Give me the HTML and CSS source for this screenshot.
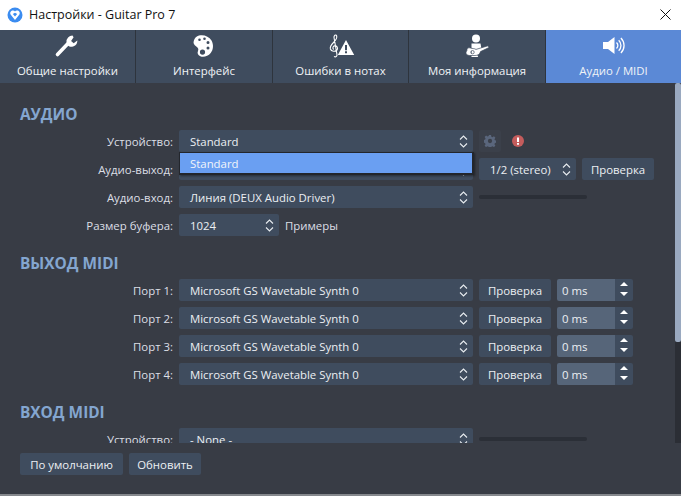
FILE: index.html
```html
<!DOCTYPE html>
<html lang="ru">
<head>
<meta charset="utf-8">
<title>Настройки - Guitar Pro 7</title>
<link rel="stylesheet" href="styles.css">
</head>
<body>
<div class="window">
  <header class="titlebar">
    <svg class="app-logo" width="16" height="16" viewBox="0 0 16 16"><circle cx="8" cy="8" r="7.5" fill="#3b8cf0"/><path d="M8 13 3.600 7.600C2.600 5.600 4 3.600 6 3.600c.9 0 1.600.4 2 1 .4-.6 1.100-1 2-1 2 0 3.400 2 2.400 4z" fill="#fff"/><path d="M5.800 7 8 5.800 10.200 7 8 9.600z" fill="#3b8cf0"/></svg>
    <span class="title">Настройки - Guitar Pro 7</span>
    <svg class="close" width="11" height="11" viewBox="0 0 11 11"><path d="M.5.5l10 10M10.500.5l-10 10" stroke="#111" stroke-width="1" fill="none"/></svg>
  </header>
  <nav class="tabs">
    <div class="tab">
      <svg class="tab-icon" width="28" height="24" viewBox="0 0 28 24"><path d="M3.500 20.500 13.500 10" stroke="#fff" stroke-width="3.600" stroke-linecap="round" fill="none"/><path d="M18.500 1.500a6 6 0 0 0-6 6.500c0 2.800 2.800 5.300 5.500 4.800 3.200-.3 5.500-2.800 5.300-6.200l-3.600 2.600-2.600-2.100 2.500-3.900z" fill="#fff"/></svg>
      <span>Общие настройки</span>
    </div>
    <div class="tab">
      <svg class="tab-icon" width="28" height="24" viewBox="0 0 28 24"><path fill-rule="evenodd" d="M9 1.500c5-1.200 10 1 12.500 5 2.200 4 2 9-.8 12.500-2.800 3.400-7.200 4.600-10.400 3.300-2.400-1-3.300-3-2.300-5.200.7-1.800.4-3-1.400-4.300C3.700 10.500 3 9 3.900 6.500 4.700 4 6.500 2.100 9 1.500zM9.500 4.500a1.300 1.300 0 1 0 0 2.600 1.300 1.300 0 0 0 0-2.600zM14.500 3.500a1.300 1.300 0 1 0 0 2.600 1.300 1.300 0 0 0 0-2.600zM18 7a1.500 1.500 0 1 0 0 3 1.500 1.500 0 0 0 0-3zM18 12.500a1.500 1.500 0 1 0 0 3 1.500 1.500 0 0 0 0-3zM12.500 15.500a2.600 2.600 0 1 0 0 5.200 2.600 2.600 0 0 0 0-5.200z" fill="#fff"/></svg>
      <span>Интерфейс</span>
    </div>
    <div class="tab">
      <svg class="tab-icon" width="28" height="24" viewBox="0 0 28 24"><path d="M7 22.500c2 1 3.400-.4 2.900-2.400L7 3.500C6.800 1.500 8.700 0 9.600 1.800c.8 2-.6 4.200-3.100 6.700C4 11 2.800 12.800 3.400 15c.8 2.400 5 3.200 6.700.9 1.200-1.900-.2-4.300-2.400-4-1.900.3-2.400 2.500-1 3.600" stroke="#fff" stroke-width="1.100" fill="none"/><path fill-rule="evenodd" d="M19 6 27.200 21H10.800zM18 11v5.300h2V11zM18 17.300v2h2v-2z" fill="#fff"/></svg>
      <span>Ошибки в нотах</span>
    </div>
    <div class="tab">
      <svg class="tab-icon" width="28" height="24" viewBox="0 0 28 24"><circle cx="13" cy="4.500" r="4" fill="#fff"/><path d="M8.500 9.500h9l1 5.500-5.500 3 2.200 5H8.500z" fill="#fff"/><path fill-rule="evenodd" d="M25 11.800 26 13.500 17.500 17.600C17 20.500 14.500 21.500 12 21.500H6.500C4 21.500 2.800 20 3 18.500c.2-1.300 1.200-1.700 1-3-.1-1.500 2-2 3.500-1.500 2 .8 3.500.2 5.500 1.400zM9.500 16.500a1.700 1.700 0 1 0 0 3.400 1.700 1.700 0 0 0 0-3.400z" fill="#fff" stroke="#3f4c5e" stroke-width=".7"/></svg>
      <span>Моя информация</span>
    </div>
    <div class="tab tab-active">
      <svg class="tab-icon" width="28" height="24" viewBox="0 0 28 24"><path d="M3 8h5L14.500 3v17L8 15H3z" fill="#fff"/><path d="M16.500 8.500c1.800 1.700 1.800 4.300 0 6M18.700 6.300c3 3 3 7.500 0 10.500M20.900 4c4.200 4.300 4.200 10.800 0 15" stroke="#fff" stroke-width="1.300" fill="none"/></svg>
      <span>Аудио / MIDI</span>
    </div>
  </nav>
  <div class="body">
    <main class="scroll">
      <section class="section">
        <h2>АУДИО</h2>
        <div class="row">
          <label>Устройство:</label>
          <div class="select wide"><span>Standard</span><svg class="chev" width="9" height="13" viewBox="0 0 9 13"><path d="M1 4.500 4.500 1 8 4.500M1 8.500 4.500 12 8 8.500" stroke="#e8ecf0" stroke-width="1.100" fill="none"/></svg></div>
          <div class="tool"><svg width="12" height="12" viewBox="0 0 14 14"><path fill-rule="evenodd" d="M5.800 0h2.400l.4 2 1.300.6 1.700-1.100 1.700 1.700-1.100 1.700.6 1.300 2 .4v2.400l-2 .4-.6 1.300 1.100 1.700-1.700 1.700-1.700-1.100-1.300.6-.4 2H5.800l-.4-2-1.300-.6-1.700 1.100-1.700-1.700 1.100-1.700-.6-1.300-2-.4V5.800l2-.4.6-1.300-1.100-1.700 1.700-1.700 1.700 1.100 1.300-.6zM7 4.500a2.500 2.500 0 1 0 0 5 2.500 2.500 0 0 0 0-5z" fill="#5a667c"/></svg></div>
          <svg class="alert" width="12" height="12" viewBox="0 0 12 12"><circle cx="6" cy="6" r="6" fill="#c45c5c"/><path d="M5 2.500h2V7H5zM5 8h2v1.800H5z" fill="#fff"/></svg>
        </div>
        <div class="row">
          <label>Аудио-выход:</label>
          <div class="select wide"><span></span><svg class="chev" width="9" height="13" viewBox="0 0 9 13"><path d="M1 4.500 4.500 1 8 4.500M1 8.500 4.500 12 8 8.500" stroke="#e8ecf0" stroke-width="1.100" fill="none"/></svg></div>
          <div class="select channels"><span>1/2 (stereo)</span><svg class="chev" width="9" height="13" viewBox="0 0 9 13"><path d="M1 4.500 4.500 1 8 4.500M1 8.500 4.500 12 8 8.500" stroke="#e8ecf0" stroke-width="1.100" fill="none"/></svg></div>
          <button class="btn test">Проверка</button>
        </div>
        <div class="row">
          <label>Аудио-вход:</label>
          <div class="select wide"><span>Линия (DEUX Audio Driver)</span><svg class="chev" width="9" height="13" viewBox="0 0 9 13"><path d="M1 4.500 4.500 1 8 4.500M1 8.500 4.500 12 8 8.500" stroke="#e8ecf0" stroke-width="1.100" fill="none"/></svg></div>
          <div class="level"></div>
        </div>
        <div class="row">
          <label>Размер буфера:</label>
          <div class="select buffer"><span>1024</span><svg class="chev" width="9" height="13" viewBox="0 0 9 13"><path d="M1 4.500 4.500 1 8 4.500M1 8.500 4.500 12 8 8.500" stroke="#e8ecf0" stroke-width="1.100" fill="none"/></svg></div>
          <span class="unit">Примеры</span>
        </div>
      </section>
      <section class="section">
        <h2>ВЫХОД MIDI</h2>
        <div class="row">
          <label>Порт 1:</label>
          <div class="select wide"><span>Microsoft GS Wavetable Synth 0</span><svg class="chev" width="9" height="13" viewBox="0 0 9 13"><path d="M1 4.500 4.500 1 8 4.500M1 8.500 4.500 12 8 8.500" stroke="#e8ecf0" stroke-width="1.100" fill="none"/></svg></div>
          <button class="btn test">Проверка</button>
          <div class="spin"><span class="spin-value">0 ms</span><span class="spin-arrows"><i class="up"></i><i class="down"></i></span></div>
        </div>
        <div class="row">
          <label>Порт 2:</label>
          <div class="select wide"><span>Microsoft GS Wavetable Synth 0</span><svg class="chev" width="9" height="13" viewBox="0 0 9 13"><path d="M1 4.500 4.500 1 8 4.500M1 8.500 4.500 12 8 8.500" stroke="#e8ecf0" stroke-width="1.100" fill="none"/></svg></div>
          <button class="btn test">Проверка</button>
          <div class="spin"><span class="spin-value">0 ms</span><span class="spin-arrows"><i class="up"></i><i class="down"></i></span></div>
        </div>
        <div class="row">
          <label>Порт 3:</label>
          <div class="select wide"><span>Microsoft GS Wavetable Synth 0</span><svg class="chev" width="9" height="13" viewBox="0 0 9 13"><path d="M1 4.500 4.500 1 8 4.500M1 8.500 4.500 12 8 8.500" stroke="#e8ecf0" stroke-width="1.100" fill="none"/></svg></div>
          <button class="btn test">Проверка</button>
          <div class="spin"><span class="spin-value">0 ms</span><span class="spin-arrows"><i class="up"></i><i class="down"></i></span></div>
        </div>
        <div class="row">
          <label>Порт 4:</label>
          <div class="select wide"><span>Microsoft GS Wavetable Synth 0</span><svg class="chev" width="9" height="13" viewBox="0 0 9 13"><path d="M1 4.500 4.500 1 8 4.500M1 8.500 4.500 12 8 8.500" stroke="#e8ecf0" stroke-width="1.100" fill="none"/></svg></div>
          <button class="btn test">Проверка</button>
          <div class="spin"><span class="spin-value">0 ms</span><span class="spin-arrows"><i class="up"></i><i class="down"></i></span></div>
        </div>
      </section>
      <section class="section">
        <h2>ВХОД MIDI</h2>
        <div class="row">
          <label>Устройство:</label>
          <div class="select wide"><span>- None -</span><svg class="chev" width="9" height="13" viewBox="0 0 9 13"><path d="M1 4.500 4.500 1 8 4.500M1 8.500 4.500 12 8 8.500" stroke="#e8ecf0" stroke-width="1.100" fill="none"/></svg></div>
          <div class="level"></div>
        </div>
      </section>
    </main>
    <div class="scrollbar"><div class="thumb"></div></div>
    <div class="popup"><div class="popup-item">Standard</div></div>
  </div>
  <footer class="footer">
    <button class="btn reset">По умолчанию</button>
    <button class="btn refresh">Обновить</button>
  </footer>
</div>
</body>
</html>
```

FILE: styles.css
```css
* { box-sizing: border-box; }
html, body { margin: 0; padding: 0; }
body {
  width: 681px;
  height: 496px;
  overflow: hidden;
  background: #383c45;
  font-family: "Open Sans", "Noto Sans", sans-serif;
  font-size: 11.4px;
  color: #eceff3;
}
.window { display: flex; flex-direction: column; width: 681px; height: 496px; }

.titlebar { display: flex; align-items: center; height: 30px; background: #fff; padding: 0 10px 2px 7px; flex: none; }
.app-logo { flex: none; margin-top: 1px; }
.title { margin-left: 6px; font-size: 12.5px; color: #111; flex: 1; }

.tabs { display: grid; grid-template-columns: 136px 137px 136px 137px 135px; height: 53px; flex: none; background: #3f4c5e; }
.tab { display: flex; flex-direction: column; align-items: center; padding-top: 4px; gap: 4px; border-right: 1px solid #2e343d; color: #f0f3f6; line-height: 18px; white-space: nowrap; }
.tab-active { background: #5b89d6; border-right: 0; }
.tab-icon { display: block; flex: none; }

.body { position: relative; display: flex; height: 360px; flex: none; }
.scroll { flex: 1; height: 360px; overflow: hidden; padding: 21px 0 0 20px; }
.section { margin-bottom: 17px; }
.section h2 { margin: 0 0 6px; height: 20px; font-size: 15.4px; line-height: 22px; font-weight: 700; color: #84a6d0; }
.row { display: flex; align-items: center; gap: 6px; height: 22px; margin-bottom: 6px; }
.row label { width: 153px; text-align: right; color: #dcdfe5; flex: none; }

.select { display: flex; align-items: center; justify-content: space-between; height: 22px; background: #3f4c5e; border-radius: 2px; padding: 0 5px 0 11px; flex: none; white-space: nowrap; }
.wide { width: 294px; }
.channels { width: 97px; }
.buffer { width: 100px; }
.chev { flex: none; }

.tool { display: flex; align-items: center; justify-content: center; width: 22px; height: 22px; background: #3b404a; border-radius: 2px; flex: none; }
.alert { flex: none; margin-left: 5px; }
.unit { color: #dcdfe5; }
.level { width: 108px; height: 4px; background: #2b2f37; border-radius: 2px; flex: none; }

.btn { height: 22px; padding: 0; background: #3f4c5e; border: 0; border-radius: 2px; font: inherit; color: #eceff3; flex: none; white-space: nowrap; }
.test { width: 72px; }
.reset { width: 103px; }
.refresh { width: 72px; }

.spin { display: flex; width: 76px; height: 22px; border-radius: 2px; overflow: hidden; flex: none; }
.spin-value { display: flex; align-items: center; width: 58px; padding-left: 5px; background: #566579; }
.spin-arrows { display: flex; flex-direction: column; align-items: center; justify-content: space-between; width: 18px; padding: 3px 0 5px; background: #3f4c5e; }
.up, .down { display: block; width: 0; height: 0; border-left: 4px solid transparent; border-right: 4px solid transparent; }
.up { border-bottom: 4px solid #fff; }
.down { border-top: 4px solid #fff; }

.scrollbar { width: 6px; height: 360px; background: #2b2e35; flex: none; }
.thumb { height: 259px; background: #9aa9c0; border-radius: 2px; }

.popup { position: absolute; left: 179px; top: 69px; width: 295px; height: 23px; padding: 1px 2px 2px 1px; background: #23262c; box-shadow: 1px 1px 2px rgba(0, 0, 0, .4); }
.popup-item { height: 20px; line-height: 21px; padding-left: 10px; background: #6a9ff2; color: #f2f5fa; }

.footer { display: flex; gap: 6px; padding: 10px 0 0 20px; flex: 1; border-bottom: 2px solid #85888d; }
```
